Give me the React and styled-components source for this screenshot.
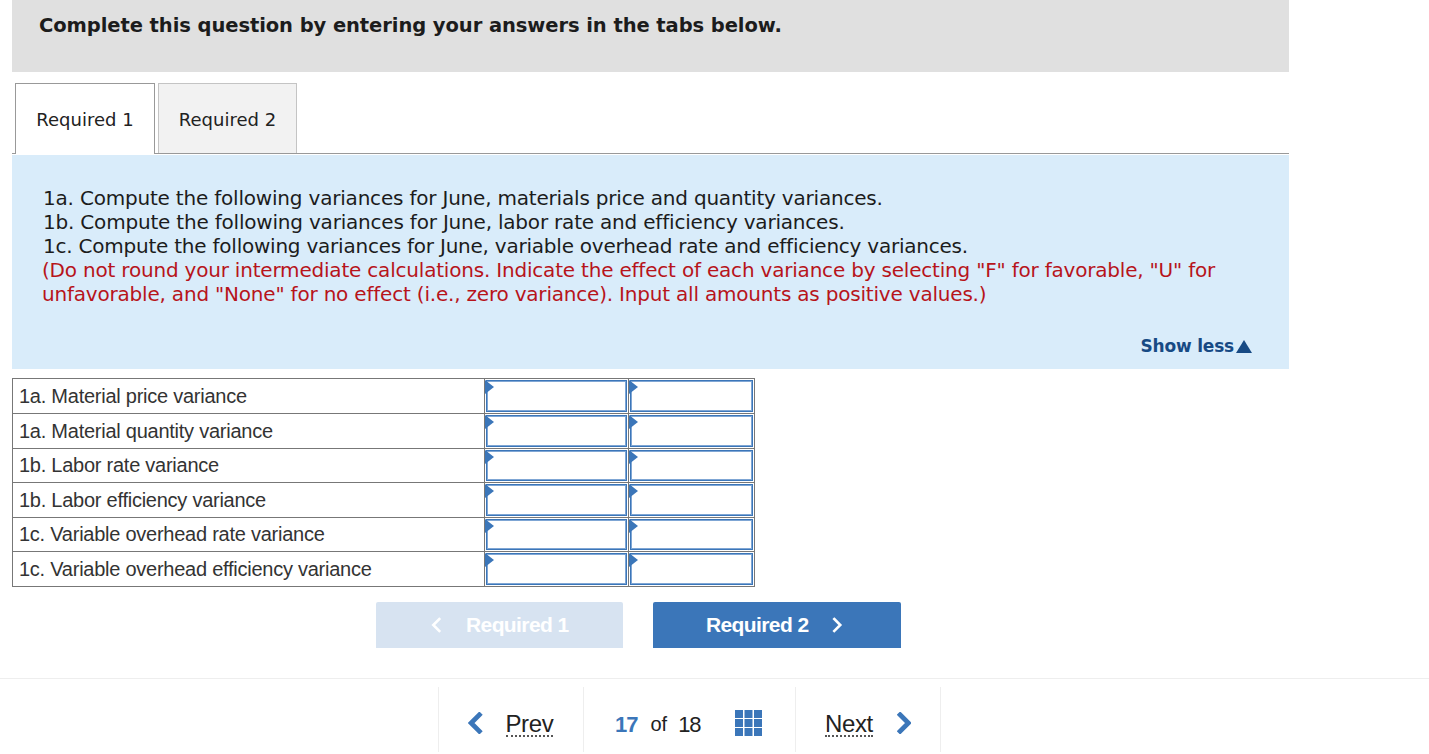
import React from 'react';
import styled, { createGlobalStyle } from 'styled-components';

const rows = [
  '1a. Material price variance',
  '1a. Material quantity variance',
  '1b. Labor rate variance',
  '1b. Labor efficiency variance',
  '1c. Variable overhead rate variance',
  '1c. Variable overhead efficiency variance',
];
const rowHeights = [35, 35, 34, 35, 34, 35];

const GlobalStyle = createGlobalStyle`
  html, body { margin: 0; padding: 0; background: #fff; overflow: hidden; }
  body { font-family: "DejaVu Sans", Verdana, sans-serif; color: #1a1a1a; }
`;

const Page = styled.div`
  width: 1429px;
  height: 754px;
  overflow: hidden;
`;

const Content = styled.div`
  width: 1277px;
  margin-left: 12px;
`;

const Banner = styled.div`
  height: 72px;
  background: #e0e0e0;
  padding: 14px 0 0 27px;
  box-sizing: border-box;
  font-size: 19.5px;
  line-height: 24px;
  font-weight: 700;
  letter-spacing: -0.07px;
  color: #1c1c1c;
`;

const TabBar = styled.div`
  display: flex;
  gap: 3px;
  height: 71px;
  margin-top: 11px;
  padding-left: 3px;
  border-bottom: 1px solid #999;
  box-sizing: border-box;
`;

const Tab = styled.div`
  width: ${(p) => p.$width}px;
  height: ${(p) => (p.$active ? 71 : 70)}px;
  box-sizing: border-box;
  display: flex;
  align-items: center;
  justify-content: center;
  font-size: 18px;
  padding-top: ${(p) => (p.$active ? 0 : 2)}px;
  background: ${(p) => (p.$active ? '#fff' : '#f2f2f2')};
  border: 1px solid ${(p) => (p.$active ? '#999' : '#c4c4c4')};
  border-bottom: 0;
  color: #222;
`;

const Prompt = styled.div`
  height: 214px;
  margin-top: 1px;
  background: #d9ecfa;
  box-sizing: border-box;
  padding: 31px 30px 0 31px;
  font-size: 20px;
  line-height: 24px;
  letter-spacing: -0.2px;
  color: #1c1c1c;
  position: relative;
`;

const PromptLine = styled.div`
  white-space: nowrap;
  letter-spacing: ${(p) => p.$spacing || -0.2}px;
`;

const RedNote = styled.div`
  color: #b7141a;
  width: 1190px;
  margin-left: -1px;
`;

const ShowLess = styled.div`
  position: absolute;
  right: 37px;
  top: 180px;
  display: flex;
  align-items: center;
  gap: 2px;
  font-size: 17px;
  line-height: 22px;
  font-weight: 700;
  letter-spacing: -0.2px;
  color: #174a84;
`;

const UpTriangle = styled.span`
  width: 0;
  height: 0;
  border-left: 8px solid transparent;
  border-right: 8px solid transparent;
  border-bottom: 13px solid #174a84;
`;

const Table = styled.table`
  margin-top: 9px;
  width: 743px;
  table-layout: fixed;
  border-collapse: collapse;
  font-family: "Liberation Sans", Arial, sans-serif;
  font-size: 20px;
  color: #333;
`;

const LabelCell = styled.td`
  width: 472px;
  padding: 0 0 0 6px;
  box-sizing: border-box;
  border: 1px solid #777;
  white-space: nowrap;
  letter-spacing: -0.25px;
`;

const InputCell = styled.td`
  position: relative;
  padding: 1px;
  border: 1px solid #777;
  width: ${(p) => p.$width}px;
  box-sizing: border-box;
`;

const Field = styled.div`
  height: ${(p) => p.$height}px;
  box-sizing: border-box;
  border: 1px solid #3b76b9;
  box-shadow: inset 0 0 0 1px #7fa6d4;
  background: #fff;
`;

const Flag = styled.span`
  position: absolute;
  left: 0;
  top: 1px;
  width: 0;
  height: 0;
  border-top: 7px solid transparent;
  border-bottom: 7px solid transparent;
  border-left: 9px solid #3b76b9;
`;

const StepRow = styled.div`
  display: flex;
  gap: 30px;
  margin: 15px 0 0 364px;
`;

const StepButton = styled.div`
  width: ${(p) => p.$width}px;
  height: 46px;
  box-sizing: border-box;
  padding: ${(p) => (p.$disabled ? '0 0 0 1px' : '0 5px 0 0')};
  display: flex;
  align-items: center;
  justify-content: center;
  gap: 24px;
  border-radius: 2px 2px 0 0;
  font-family: "Liberation Sans", Arial, sans-serif;
  font-size: 21px;
  font-weight: 700;
  letter-spacing: -0.6px;
  color: #fff;
  background: ${(p) => (p.$disabled ? '#d7e3f1' : '#3b76b9')};
`;

const Footer = styled.div`
  margin-top: 30px;
  border-top: 1px solid #eee;
  padding: 8px 0 0 438px;
  display: flex;
  height: 66px;
  font-family: "Liberation Sans", Arial, sans-serif;
  font-size: 24px;
  color: #222;
`;

const FooterCell = styled.div`
  width: ${(p) => p.$width}px;
  height: 65px;
  box-sizing: border-box;
  display: flex;
  align-items: center;
  padding: 10px 0 0 ${(p) => p.$pad}px;
  border-left: 1px solid #eee;
  border-right: ${(p) => (p.$last ? '1px solid #eee' : 'none')};
`;

const PagerLink = styled.span`
  border-bottom: 2px dotted #555;
  line-height: 23px;
  margin: ${(p) => p.$margin};
  letter-spacing: -0.4px;
`;

const Current = styled.b`
  color: #3b76b9;
  font-size: 22px;
  letter-spacing: -1px;
`;

const Of = styled.span`
  font-size: 20px;
  margin: 0 11px 0 13px;
`;

const Total = styled.span`
  font-size: 22px;
  letter-spacing: -1.1px;
`;

const Grid = styled.svg`
  margin: -3px 0 0 35px;
`;

const ChevronSvg = styled.svg`
  margin-top: ${(p) => p.$lift || 0}px;
`;

const Chevron = ({ dir, size, width, color, lift }) => (
  <ChevronSvg $lift={lift} width={size * 0.66} height={size} viewBox="0 0 10 16" fill="none" stroke={color} strokeWidth={width} strokeLinecap="square">
    <path d={dir === 'left' ? 'M8 2 L2 8 L8 14' : 'M2 2 L8 8 L2 14'} />
  </ChevronSvg>
);

const GridIcon = () => (
  <Grid width="27" height="26" viewBox="0 0 27 26" fill="#3b76b9">
    {[0, 9, 18].map((y) =>
      [0, 9.5, 19].map((x) => <rect key={`${x}-${y}`} x={x} y={y} width="8" height="8" />)
    )}
  </Grid>
);

const App = () => (
  <Page>
    <GlobalStyle />
    <Content>
      <Banner>Complete this question by entering your answers in the tabs below.</Banner>
      <TabBar>
        <Tab $active $width={140}>Required 1</Tab>
        <Tab $width={139}>Required 2</Tab>
      </TabBar>
      <Prompt>
        <PromptLine>1a. Compute the following variances for June, materials price and quantity variances.</PromptLine>
        <PromptLine>1b. Compute the following variances for June, labor rate and efficiency variances.</PromptLine>
        <PromptLine $spacing={-0.23}>1c. Compute the following variances for June, variable overhead rate and efficiency variances.</PromptLine>
        <RedNote>(Do not round your intermediate calculations. Indicate the effect of each variance by selecting "F" for favorable, "U" for unfavorable, and "None" for no effect (i.e., zero variance). Input all amounts as positive values.)</RedNote>
        <ShowLess>Show less<UpTriangle /></ShowLess>
      </Prompt>
      <Table>
        <tbody>
          {rows.map((label, i) => (
            <tr key={label} style={{ height: rowHeights[i] }}>
              <LabelCell>{label}</LabelCell>
              <InputCell $width={144}><Field $height={rowHeights[i] - 3} /><Flag /></InputCell>
              <InputCell $width={126}><Field $height={rowHeights[i] - 3} /><Flag /></InputCell>
            </tr>
          ))}
        </tbody>
      </Table>
      <StepRow>
        <StepButton $disabled $width={247}>
          <Chevron dir="left" size={16} width={2.6} color="#fff" />
          Required 1
        </StepButton>
        <StepButton $width={248}>
          Required 2
          <Chevron dir="right" size={16} width={2.6} color="#fff" />
        </StepButton>
      </StepRow>
    </Content>
    <Footer>
      <FooterCell $width={145} $pad={29}>
        <Chevron dir="left" size={22} width={3.4} color="#3b76b9" lift={-3} />
        <PagerLink $margin="0 0 0 23px">Prev</PagerLink>
      </FooterCell>
      <FooterCell $width={212} $pad={31}>
        <Current>17</Current>
        <Of>of</Of>
        <Total>18</Total>
        <GridIcon />
      </FooterCell>
      <FooterCell $width={146} $pad={29} $last>
        <PagerLink $margin="0 24px 0 0">Next</PagerLink>
        <Chevron dir="right" size={22} width={3.4} color="#3b76b9" lift={-3} />
      </FooterCell>
    </Footer>
  </Page>
);

export default App;
